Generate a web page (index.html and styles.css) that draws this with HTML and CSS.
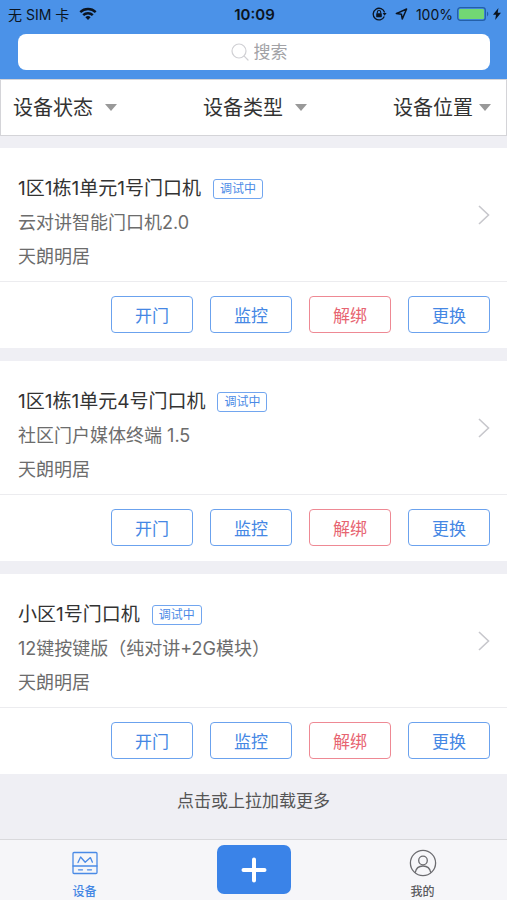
FILE: index.html
```html
<!DOCTYPE html>
<html lang="zh-CN">
<head>
<meta charset="utf-8">
<meta name="viewport" content="width=device-width, initial-scale=1">
<title>设备</title>
<link rel="stylesheet" href="styles.css">
</head>
<body>
<div class="app">
  <header class="header">
    <div class="status">
      <div class="status-left">
        <span>无 SIM 卡</span>
        <svg width="18" height="14" viewBox="0 0 18 14" fill="none" stroke="#0b1420" stroke-width="2.4" aria-hidden="true"><path d="M1.3 5.2a11 11 0 0 1 15.4 0M4.2 8.2a6.8 6.8 0 0 1 9.6 0"/><path d="M9 13l-2.6-2.7a3.7 3.7 0 0 1 5.2 0z" fill="#0b1420" stroke="none"/></svg>
      </div>
      <time class="clock">10:09</time>
      <div class="status-right">
        <svg width="15" height="14" viewBox="0 0 15 14" fill="none" stroke="#0b1420" aria-hidden="true"><path d="M12.3 9.5A5.8 5.8 0 1 1 12.6 5.5" stroke-width="1.3"/><path d="M10.6 6h4l-2 2.8z" fill="#0b1420" stroke="none"/><rect x="4.2" y="6.2" width="5.6" height="4" rx=".6" fill="#0b1420" stroke="none"/><path d="M5.3 6.4V5.2a1.7 1.7 0 0 1 3.4 0v1.2" stroke-width="1.1"/></svg>
        <svg class="location" width="13" height="12" viewBox="0 0 13 12" fill="none" stroke="#0b1420" stroke-width="1.5" stroke-linejoin="round" aria-hidden="true"><path d="M1.3 5.6L11.6 1 7.3 11 6.4 6.2z"/></svg>
        <span>100%</span>
        <svg width="32" height="14" viewBox="0 0 32 14" aria-hidden="true"><rect x=".7" y=".7" width="27.6" height="12.6" rx="2.6" fill="#4b92e8" stroke="#245fa8" stroke-width="1.3"/><rect x="2" y="2" width="25" height="10" rx="1.2" fill="#72d774"/><path d="M30 4.6c1.8.8 1.8 4 0 4.8z" fill="#245fa8"/></svg>
        <svg class="bolt" width="8" height="12" viewBox="0 0 8 12" aria-hidden="true"><path d="M5.4 0L0 6.8h3L2.2 12 8 4.8H4.7z" fill="#0b1420"/></svg>
      </div>
    </div>
    <label class="search">
      <svg width="18" height="18" viewBox="0 0 18 18" fill="none" stroke="#d0d0d4" stroke-width="1.2" stroke-linecap="round" aria-hidden="true"><circle cx="8" cy="8" r="7"/><path d="M13.2 13.2L17 17"/></svg>
      <input type="search" placeholder="搜索" aria-label="搜索">
    </label>
  </header>

  <nav class="filters" aria-label="筛选">
    <label class="filter"><select aria-label="设备状态"><option>设备状态</option></select><svg width="12" height="7" viewBox="0 0 12 7" aria-hidden="true"><path d="M0 0h12L6 7z" fill="#999"/></svg></label>
    <label class="filter"><select aria-label="设备类型"><option>设备类型</option></select><svg width="12" height="7" viewBox="0 0 12 7" aria-hidden="true"><path d="M0 0h12L6 7z" fill="#999"/></svg></label>
    <label class="filter filter-last"><select aria-label="设备位置"><option>设备位置</option></select><svg width="12" height="7" viewBox="0 0 12 7" aria-hidden="true"><path d="M0 0h12L6 7z" fill="#999"/></svg></label>
  </nav>

  <main class="list">
    <article class="card">
      <a class="info" href="#">
        <div class="details">
          <div class="heading"><h2>1区1栋1单元1号门口机</h2><span class="badge">调试中</span></div>
          <p>云对讲智能门口机2.0</p>
          <p>天朗明居</p>
        </div>
        <svg width="12" height="20" viewBox="0 0 12 20" fill="none" stroke="#c7c7cc" stroke-width="1.6" aria-hidden="true"><path d="M1 1l9.5 9L1 19"/></svg>
      </a>
      <div class="actions">
        <button type="button">开门</button><button type="button">监控</button><button type="button" class="danger">解绑</button><button type="button">更换</button>
      </div>
    </article>
    <article class="card">
      <a class="info" href="#">
        <div class="details">
          <div class="heading"><h2>1区1栋1单元4号门口机</h2><span class="badge">调试中</span></div>
          <p>社区门户媒体终端 1.5</p>
          <p>天朗明居</p>
        </div>
        <svg width="12" height="20" viewBox="0 0 12 20" fill="none" stroke="#c7c7cc" stroke-width="1.6" aria-hidden="true"><path d="M1 1l9.5 9L1 19"/></svg>
      </a>
      <div class="actions">
        <button type="button">开门</button><button type="button">监控</button><button type="button" class="danger">解绑</button><button type="button">更换</button>
      </div>
    </article>
    <article class="card">
      <a class="info" href="#">
        <div class="details">
          <div class="heading"><h2>小区1号门口机</h2><span class="badge">调试中</span></div>
          <p>12键按键版（纯对讲+2G模块）</p>
          <p>天朗明居</p>
        </div>
        <svg width="12" height="20" viewBox="0 0 12 20" fill="none" stroke="#c7c7cc" stroke-width="1.6" aria-hidden="true"><path d="M1 1l9.5 9L1 19"/></svg>
      </a>
      <div class="actions">
        <button type="button">开门</button><button type="button">监控</button><button type="button" class="danger">解绑</button><button type="button">更换</button>
      </div>
    </article>
  </main>

  <button type="button" class="more">点击或上拉加载更多</button>

  <nav class="tabs" aria-label="主导航">
    <a class="tab active" href="#">
      <svg width="28" height="28" viewBox="0 0 28 28" fill="none" stroke="#4a8ae6" stroke-width="1.3" stroke-linecap="round" stroke-linejoin="round" aria-hidden="true"><rect x="2" y="3.5" width="24" height="21" rx="1"/><path d="M2 17h24M7 13.6l2.600-5.600 4.600 5.200 5.200-4.600 2 4.600M7.500 20.800h4M16.500 20.800h4"/></svg>
      <span>设备</span>
    </a>
    <button type="button" class="add" aria-label="添加">
      <svg width="26" height="26" viewBox="0 0 26 26" fill="none" stroke="#fff" stroke-width="4" stroke-linecap="round" aria-hidden="true"><path d="M13 2.500v21M2.500 13h21"/></svg>
    </button>
    <a class="tab" href="#">
      <svg width="28" height="28" viewBox="0 0 28 28" fill="none" stroke="#6b6b6f" stroke-width="1.3" aria-hidden="true"><circle cx="14" cy="14" r="12.600"/><circle cx="14" cy="11.500" r="4.300"/><path d="M6.200 23.600c.8-4.400 3.600-6.600 7.800-6.600s7 2.200 7.800 6.600"/></svg>
      <span>我的</span>
    </a>
  </nav>
</div>
</body>
</html>
```
FILE: styles.css
```css
* {
  box-sizing: border-box;
}

body {
  margin: 0;
  background: #efeff4;
  color: #333;
  font-family: Inter, "Noto Sans CJK SC", sans-serif;
}

button,
input,
select {
  font-family: inherit;
}

a {
  color: inherit;
  text-decoration: none;
}

svg {
  display: block;
  flex: none;
}

.app {
  display: flex;
  flex-direction: column;
  min-height: 100vh;
}

.header {
  padding-bottom: 9px;
  background: #4b92e8;
}

.status {
  display: grid;
  grid-template-columns: 1fr auto 1fr;
  align-items: center;
  height: 28px;
  margin-bottom: 6px;
  padding: 0 6px 0 8px;
  color: #0b1420;
  font-size: 14px;
}

.status-left,
.status-right {
  display: flex;
  align-items: center;
  gap: 10px;
}

.status-right {
  justify-content: flex-end;
  gap: 4px;
}

.location {
  margin: 0 4px;
}

.clock {
  font-weight: 600;
  font-size: 15px;
}

.search {
  display: flex;
  align-items: center;
  justify-content: center;
  gap: 5px;
  height: 36px;
  margin: 0 17px 0 18px;
  padding-left: 12px;
  border-radius: 8px;
  background: #fff;
}

.search input {
  width: 36px;
  padding: 0;
  border: 0;
  outline: 0;
  background: none;
  font-size: 17px;
  appearance: none;
}

.search input::-webkit-search-cancel-button {
  display: none;
}

.search input::placeholder {
  color: #a2a2a6;
  opacity: 1;
}

.filters {
  display: flex;
  justify-content: space-between;
  height: 57px;
  padding: 0 15px 0 12px;
  border: 1px solid #d4d4d8;
  background: #fff;
}

.filter {
  display: flex;
  align-items: center;
  gap: 12px;
}

.filter-last {
  gap: 6px;
}

.filter select {
  padding: 0;
  border: 0;
  background: none;
  color: #333;
  font-size: 20px;
  appearance: none;
}

.list {
  display: grid;
  gap: 13px;
  padding-top: 12px;
}

.card {
  background: #fff;
}

.info {
  display: flex;
  align-items: center;
  justify-content: space-between;
  padding: 0 17px 0 18px;
  border-bottom: 1px solid #ececef;
}

.details {
  padding: 24px 0 7px;
}

.heading {
  display: flex;
  align-items: center;
  gap: 12px;
}

.heading h2,
.details p {
  margin: 0;
  font-weight: 400;
  font-size: 19px;
  line-height: 34px;
}

.details p {
  color: #6c6c6c;
  font-size: 18px;
}

.badge {
  padding: 0 6px;
  border: 1px solid #72a6ef;
  border-radius: 3px;
  color: #4a8ae6;
  font-size: 12px;
  line-height: 18px;
}

.actions {
  display: flex;
  justify-content: flex-end;
  gap: 17px;
  padding: 14px 17px 15px;
}

.actions button {
  width: 82px;
  height: 37px;
  padding: 0;
  border: 1px solid #6ba2ee;
  border-radius: 4px;
  background: #fff;
  color: #4587e4;
  font-size: 17px;
}

.actions .danger {
  border-color: #ee8994;
  color: #e76471;
}

.more {
  height: 50px;
  padding: 0;
  border: 0;
  background: none;
  color: #555;
  font-size: 17px;
}

.tabs {
  display: grid;
  grid-template-columns: repeat(3, 1fr);
  justify-items: center;
  height: 61px;
  margin-top: auto;
  border-top: 1px solid #d9d9dc;
  background: #f6f6f9;
}

.tab {
  display: flex;
  flex-direction: column;
  align-items: center;
  gap: 7px;
  padding-top: 9px;
  color: #5a5a5e;
  font-weight: 500;
  font-size: 12px;
  line-height: 16px;
}

.tab.active {
  color: #4587e4;
}

.add {
  display: flex;
  align-items: center;
  justify-content: center;
  width: 74px;
  height: 49px;
  margin-top: 5px;
  padding: 0;
  border: 0;
  border-radius: 7px;
  background: #3a83e8;
}
```
